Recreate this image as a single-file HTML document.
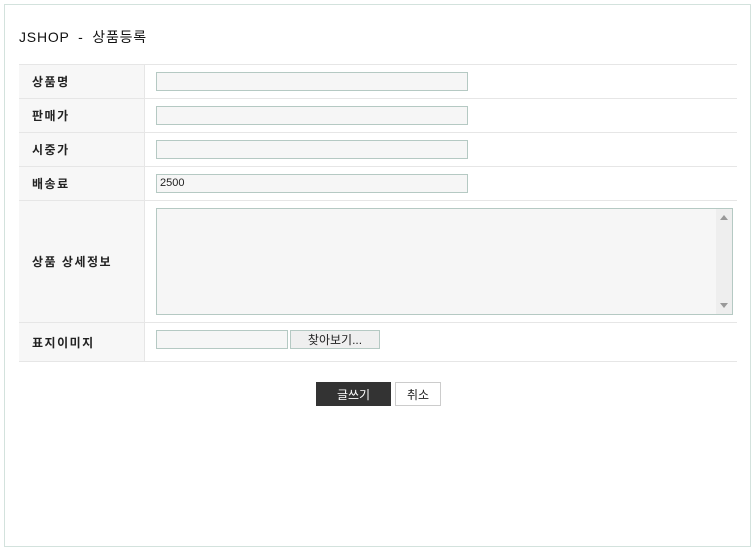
<!DOCTYPE html>
<html><head><meta charset="utf-8"><style>
*{box-sizing:border-box;margin:0;padding:0}
body{width:756px;height:550px;background:#fff;font-family:"Liberation Sans","Noto Sans CJK KR","NanumGothic",sans-serif;font-size:12px;color:#222;position:relative;overflow:hidden}
.box{position:absolute;left:4px;top:4px;width:747px;height:543px;border:1px solid #d3e2dd}
.t{position:absolute;left:19px;top:27px;font-size:14px;color:#111;letter-spacing:0.8px;word-spacing:4px}
.row{position:absolute;left:19px;width:718px;border-top:1px solid #e6e6e6}
.lab{position:absolute;left:0;top:0;bottom:0;width:126px;background:#f7f7f7;border-right:1px solid #e6e6e6;font-weight:bold;padding-left:13px;display:flex;align-items:center;font-size:12px;letter-spacing:1.5px}
.in{position:absolute;background:#f6f6f6;border:1px solid #b5c9c3;font-size:11px;padding-left:3px;line-height:17px}
.btn{position:absolute;display:flex;align-items:center;justify-content:center;font-size:12px}
</style></head><body>
<div class="box"></div>
<div class="t">JSHOP - 상품등록</div>
<div class="row" style="top:64px;height:34px"><div class="lab">상품명</div></div>
<div class="row" style="top:98px;height:34px"><div class="lab">판매가</div></div>
<div class="row" style="top:132px;height:34px"><div class="lab">시중가</div></div>
<div class="row" style="top:166px;height:34px"><div class="lab">배송료</div></div>
<div class="row" style="top:200px;height:122px"><div class="lab">상품 상세정보</div></div>
<div class="row" style="top:322px;height:40px;border-bottom:1px solid #e6e6e6"><div class="lab">표지이미지</div></div>
<div class="in" style="left:156px;top:72px;width:312px;height:19px"></div>
<div class="in" style="left:156px;top:106px;width:312px;height:19px"></div>
<div class="in" style="left:156px;top:140px;width:312px;height:19px"></div>
<div class="in" style="left:156px;top:174px;width:312px;height:19px">2500</div>
<div class="in" style="left:156px;top:208px;width:577px;height:107px"><div style="position:absolute;right:0;top:0;bottom:0;width:16px;background:#eee"><div style="position:absolute;left:4px;top:6px;border:4px solid transparent;border-bottom:5px solid #999;border-top:0"></div><div style="position:absolute;left:4px;bottom:6px;border:4px solid transparent;border-top:5px solid #999;border-bottom:0"></div></div></div>
<div class="in" style="left:156px;top:330px;width:132px;height:19px"></div>
<div class="btn" style="left:290px;top:330px;width:90px;height:19px;background:#efefef;border:1px solid #b5c9c3">찾아보기...</div>
<div class="btn" style="left:316px;top:382px;width:75px;height:24px;background:#333;color:#fff">글쓰기</div>
<div class="btn" style="left:395px;top:382px;width:46px;height:24px;background:#fff;border:1px solid #ccc">취소</div>
</body></html>
